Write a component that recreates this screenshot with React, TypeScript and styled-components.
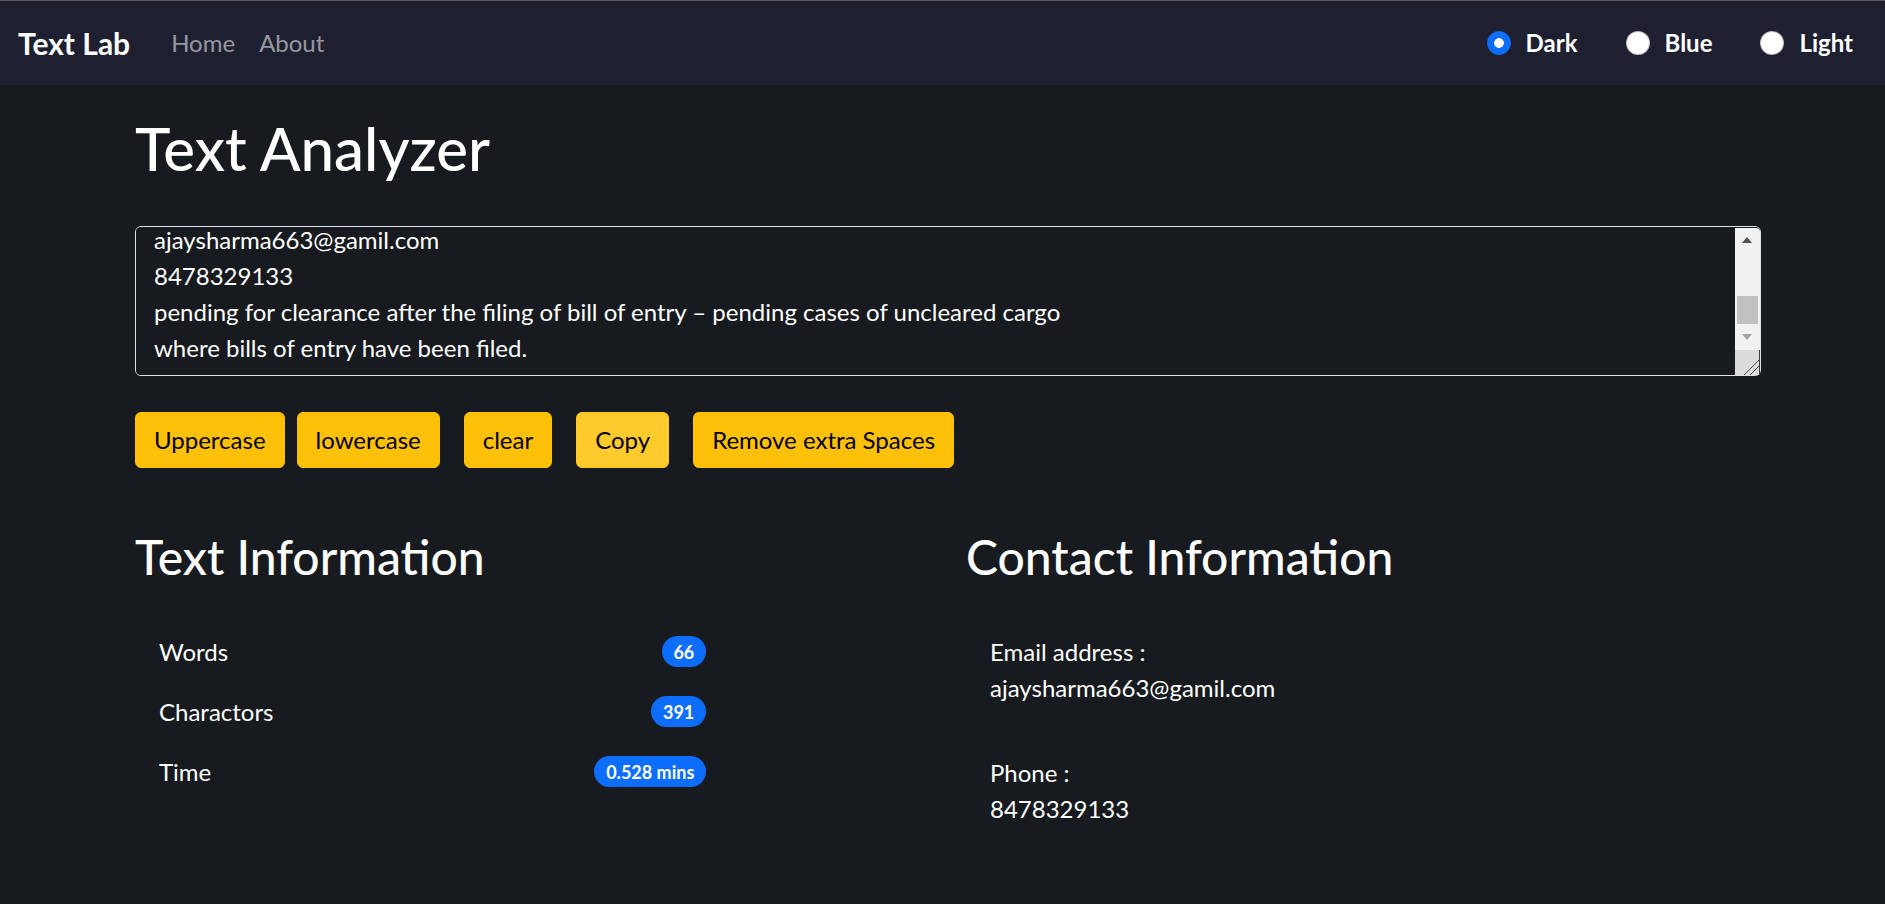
import React, { useCallback, useLayoutEffect, useRef, useState } from "react";
import styled, { createGlobalStyle } from "styled-components";

const INITIAL_TEXT = [
  "Dear Sir/Madam,",
  "I am writing to request an update on the status of my shipment.",
  "The consignment has been held at the port for more than two weeks.",
  "Kindly look into the matter at the earliest.",
  "Regards,",
  "Ajay Sharma, Imports Desk.",
  "ajaysharma663@gamil.com",
  "8478329133",
  "pending for clearance after the filing of bill of entry \u2013 pending cases of uncleared cargo",
  "where bills of entry have been filed.",
].join("\n");

const FONT = `Lato, "Open Sans", "Noto Sans", sans-serif`;

const GlobalStyle = createGlobalStyle`
  html, body {
    margin: 0;
    padding: 0;
    background: #171a1e;
    color: #ffffff;
    font-family: ${FONT};
  }
  * { box-sizing: border-box; }
`;

const Nav = styled.nav`
  display: flex;
  align-items: center;
  height: 85px;
  padding: 12px 32px 12px 18px;
  background: #1e2031;
  border-top: 1px solid #5c5c5c;
`;

const Brand = styled.a`
  font-size: 30px;
  line-height: 45px;
  font-weight: 700;
  color: #ffffff;
  text-decoration: none;
  margin-right: 29px;
`;

const NavLink = styled.a`
  font-size: 24px;
  line-height: 36px;
  color: rgba(255, 255, 255, 0.55);
  text-decoration: none;
  padding: 0 12px;
`;

const ThemeGroup = styled.div`
  margin-left: auto;
  display: flex;
  align-items: center;
  gap: 48px;
`;

const ThemeOption = styled.label`
  display: flex;
  align-items: center;
  gap: 15px;
  font-size: 24px;
  line-height: 36px;
  font-weight: 700;
  color: #ffffff;
  cursor: pointer;
`;

const Radio = styled.input`
  appearance: none;
  margin: 0;
  width: 24px;
  height: 24px;
  border-radius: 50%;
  background: #ffffff;
  border: 1.5px solid rgba(0, 0, 0, 0.25);
  cursor: pointer;
  &:checked {
    background: radial-gradient(circle, #ffffff 0 4.5px, #0d6efd 5.2px);
    border-color: #0d6efd;
  }
`;

const Main = styled.main`
  padding: 27px 124px 0 135px;
`;

const Title = styled.h1`
  margin: 0 0 42px;
  font-size: 60px;
  line-height: 72px;
  font-weight: 500;
`;

const EditorFrame = styled.div`
  position: relative;
  height: 150px;
`;

const TextArea = styled.textarea`
  display: block;
  width: 100%;
  height: 100%;
  margin: 0;
  padding: 9px 43px 9px 18px;
  font-family: ${FONT};
  font-size: 24px;
  line-height: 36px;
  color: #ffffff;
  background: #171a1e;
  border: 1.5px solid #dee2e6;
  border-radius: 6px;
  outline: none;
  resize: none;
  overflow-y: scroll;
  scrollbar-width: none;
  &::-webkit-scrollbar {
    display: none;
  }
`;

const Scrollbar = styled.div`
  position: absolute;
  top: 1.5px;
  right: 1.5px;
  bottom: 1.5px;
  width: 25px;
  display: grid;
  grid-template-rows: 25px 1fr 25px 25px;
  background: #f1f1f1;
  border-top-right-radius: 4px;
  pointer-events: none;
`;

const ScrollButton = styled.div<{ $down?: boolean; $disabled?: boolean }>`
  display: flex;
  align-items: center;
  justify-content: center;
  &::before {
    content: "";
    width: 0;
    height: 0;
    border-left: 5.5px solid transparent;
    border-right: 5.5px solid transparent;
    ${(p) =>
      p.$down
        ? `border-top: 6px solid ${p.$disabled ? "#a3a3a3" : "#505050"};`
        : `border-bottom: 6px solid ${p.$disabled ? "#a3a3a3" : "#505050"};`}
  }
`;

const ScrollTrack = styled.div`
  position: relative;
`;

const ScrollThumb = styled.div`
  position: absolute;
  left: 2px;
  right: 2px;
  background: #c1c1c1;
`;

const Resizer = styled.div`
  background: linear-gradient(
      135deg,
      transparent 68%,
      #4a4a4a 68% 71%,
      transparent 71% 80%,
      #4a4a4a 80% 83%,
      transparent 83%
    ),
    #dcdcdc;
  border-right: 1px solid #3a3a3a;
`;

const ButtonRow = styled.div`
  display: flex;
  align-items: center;
  margin-top: 36px;
`;

const ActionButton = styled.button<{ $light?: boolean; $gap: number }>`
  margin-left: ${(p) => p.$gap}px;
  padding: 9px 18px;
  font-family: ${FONT};
  font-size: 24px;
  line-height: 36px;
  color: #000000;
  background: ${(p) => (p.$light ? "#ffca2c" : "#ffc107")};
  border: 1.5px solid ${(p) => (p.$light ? "#ffc720" : "#ffc107")};
  border-radius: 6px;
  cursor: pointer;
`;

const InfoRow = styled.div`
  display: grid;
  grid-template-columns: 795px 795px;
  column-gap: 36px;
  margin-top: 60px;
`;

const Column = styled.section`
  display: flex;
  flex-direction: column;
`;

const SectionTitle = styled.h2`
  margin: 0 0 36px;
  font-size: 48px;
  line-height: 57.6px;
  font-weight: 500;
`;

const StatList = styled.ul`
  list-style: none;
  margin: 0;
  padding: 0;
  width: 595px;
`;

const StatItem = styled.li`
  display: flex;
  align-items: center;
  justify-content: space-between;
  padding: 12px 24px;
  font-size: 24px;
  line-height: 36px;
`;

const Badge = styled.span`
  display: inline-block;
  padding: 6.3px 11.7px;
  font-size: 18px;
  line-height: 1;
  font-weight: 700;
  color: #ffffff;
  background: #0d6efd;
  border-radius: 999px;
`;

const ContactList = styled.ul`
  list-style: none;
  margin: 0;
  padding: 0;
  display: flex;
  flex-direction: column;
  gap: 25px;
`;

const ContactItem = styled.li`
  padding: 12px 24px;
  font-size: 24px;
  line-height: 36px;
`;

export default function App() {
  const [text, setText] = useState(INITIAL_TEXT);
  const [theme, setTheme] = useState("dark");
  const [thumb, setThumb] = useState({ top: 0, size: 1, atEnd: false });
  const areaRef = useRef<HTMLTextAreaElement>(null);

  const measure = useCallback(() => {
    const el = areaRef.current;
    if (!el) return;
    const ratio = el.clientHeight / el.scrollHeight;
    const maxScroll = el.scrollHeight - el.clientHeight;
    setThumb({
      size: Math.min(1, ratio),
      top: maxScroll > 0 ? (el.scrollTop / maxScroll) * (1 - ratio) : 0,
      atEnd: el.scrollTop >= maxScroll - 1,
    });
  }, []);

  useLayoutEffect(() => {
    const el = areaRef.current;
    if (el) el.scrollTop = el.scrollHeight;
    measure();
  }, [measure]);

  useLayoutEffect(() => {
    measure();
  }, [text, measure]);

  const words = text.split(/\s+/).filter((w) => w.length !== 0).length;
  const chars = text.length;
  const time = Number((words * 0.008).toFixed(3));
  const email = (text.match(/[\w.+-]+@[\w-]+\.[\w.]+/) || [""])[0];
  const phone = (text.match(/\b\d{10}\b/) || [""])[0];

  const collapseSpaces = () => setText(text.split(/[ ]+/).join(" "));

  return (
    <>
      <GlobalStyle />
      <Nav>
        <Brand href="#">Text Lab</Brand>
        <NavLink href="#">Home</NavLink>
        <NavLink href="#">About</NavLink>
        <ThemeGroup>
          {[
            ["dark", "Dark"],
            ["blue", "Blue"],
            ["light", "Light"],
          ].map(([value, label]) => (
            <ThemeOption key={value}>
              <Radio
                type="radio"
                name="theme"
                value={value}
                checked={theme === value}
                onChange={() => setTheme(value)}
              />
              {label}
            </ThemeOption>
          ))}
        </ThemeGroup>
      </Nav>
      <Main>
        <Title>Text Analyzer</Title>
        <EditorFrame>
          <TextArea
            ref={areaRef}
            value={text}
            onScroll={measure}
            onChange={(e) => setText(e.target.value)}
          />
          <Scrollbar aria-hidden="true">
            <ScrollButton $disabled={thumb.top <= 0} />
            <ScrollTrack>
              <ScrollThumb
                style={{
                  top: `${thumb.top * 100}%`,
                  height: `${thumb.size * 100}%`,
                }}
              />
            </ScrollTrack>
            <ScrollButton $down $disabled={thumb.atEnd} />
            <Resizer />
          </Scrollbar>
        </EditorFrame>
        <ButtonRow>
          <ActionButton $gap={0} onClick={() => setText(text.toUpperCase())}>
            Uppercase
          </ActionButton>
          <ActionButton $gap={12} onClick={() => setText(text.toLowerCase())}>
            lowercase
          </ActionButton>
          <ActionButton $gap={24} onClick={() => setText("")}>
            clear
          </ActionButton>
          <ActionButton
            $gap={24}
            $light
            onClick={() => navigator.clipboard?.writeText(text)}
          >
            Copy
          </ActionButton>
          <ActionButton $gap={24} onClick={collapseSpaces}>
            Remove extra Spaces
          </ActionButton>
        </ButtonRow>
        <InfoRow>
          <Column>
            <SectionTitle>Text Information</SectionTitle>
            <StatList>
              <StatItem>
                Words <Badge>{words}</Badge>
              </StatItem>
              <StatItem>
                Charactors <Badge>{chars}</Badge>
              </StatItem>
              <StatItem>
                Time <Badge>{time} mins</Badge>
              </StatItem>
            </StatList>
          </Column>
          <Column>
            <SectionTitle>Contact Information</SectionTitle>
            <ContactList>
              <ContactItem>
                Email address :<br />
                {email}
              </ContactItem>
              <ContactItem>
                Phone :<br />
                {phone}
              </ContactItem>
            </ContactList>
          </Column>
        </InfoRow>
      </Main>
    </>
  );
}
